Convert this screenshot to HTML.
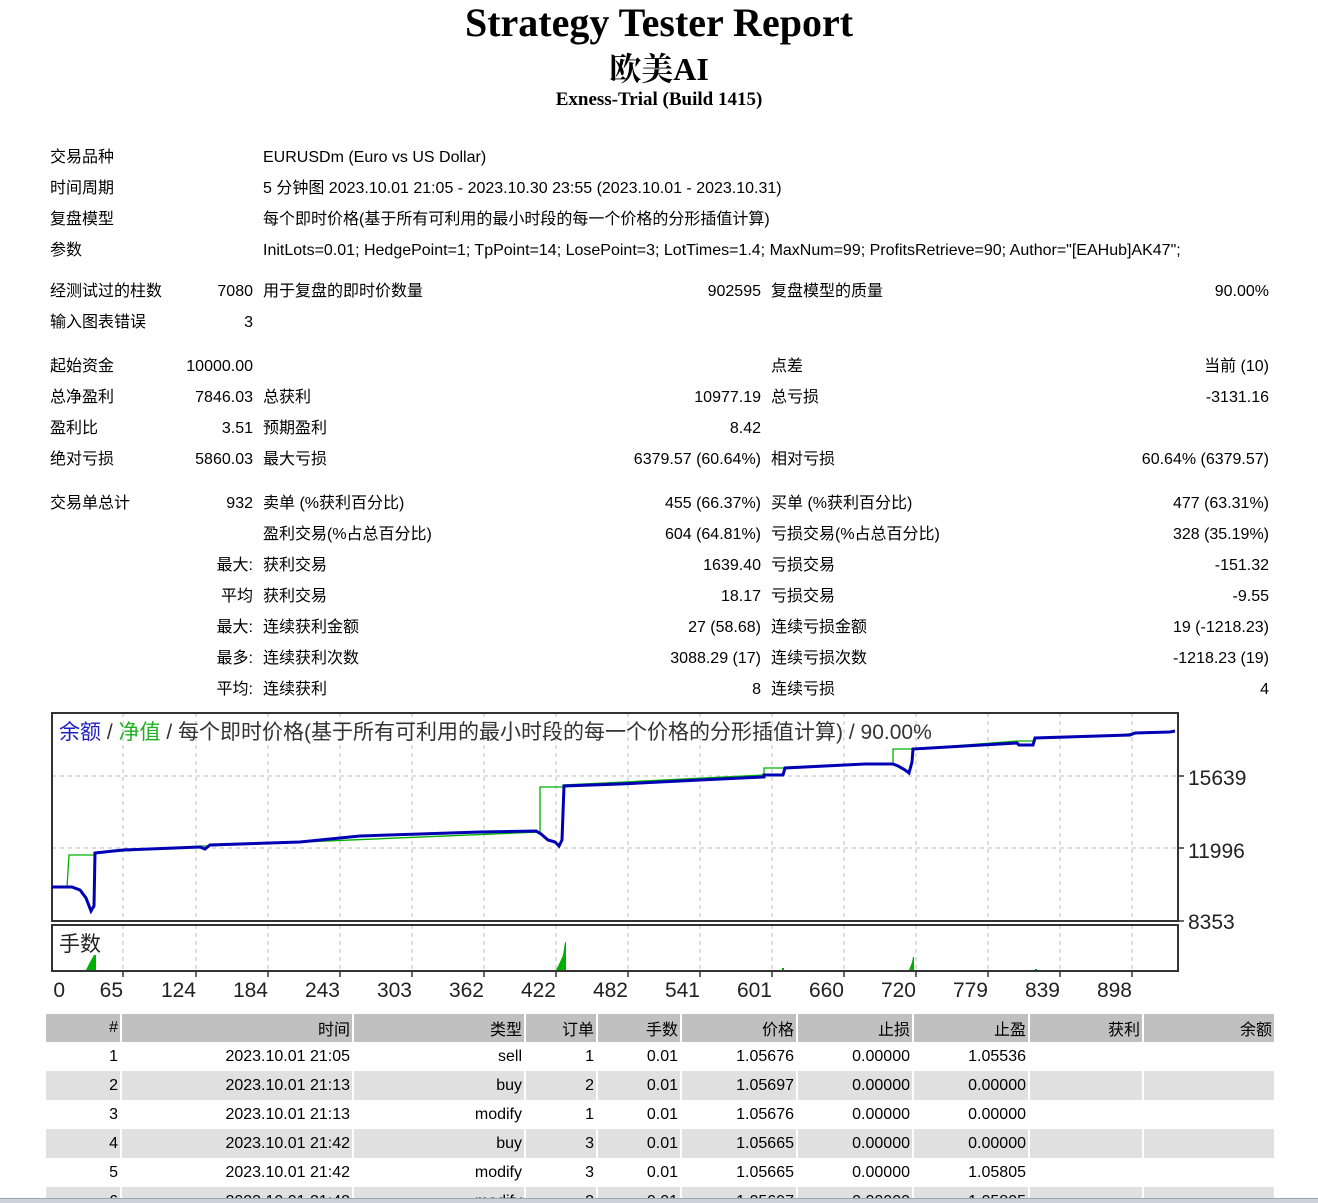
<!DOCTYPE html>
<html style="overflow:hidden;height:1203px"><head><meta charset="utf-8"><style>
body{margin:0;width:1318px;height:1203px;background:#fff;position:relative;overflow:hidden;font-family:Tahoma,"Liberation Sans","Noto Sans CJK SC",sans-serif;font-size:16px;color:#000}
.t{position:absolute;white-space:nowrap;line-height:18px}
.r{text-align:right}
.h1{position:absolute;left:0;width:1318px;text-align:center;font-family:"Liberation Serif",serif;font-weight:bold}
table{position:absolute;left:44px;top:1014px;border-collapse:separate;border-spacing:2px 0;font-size:16px}
td{height:29px;text-align:right;padding:0 2px;white-space:nowrap}
tr.hd td{background:#c0c0c0;height:28px}
tr.g td{background:#e0e0e0}
</style></head><body>
<div class="h1" style="top:1px;font-size:40px;line-height:44px">Strategy Tester Report</div>
<div class="h1" style="top:50px;font-size:32px;line-height:38px;font-family:'Liberation Serif','Noto Serif CJK SC',serif">欧美AI</div>
<div class="h1" style="top:89px;font-size:19px;line-height:22px">Exness-Trial (Build 1415)</div>

<div class="t" style="left:50px;top:149px">交易品种</div><div class="t" style="left:263px;top:149px">EURUSDm (Euro vs US Dollar)</div>
<div class="t" style="left:50px;top:180px">时间周期</div><div class="t" style="left:263px;top:180px">5 分钟图 2023.10.01 21:05 - 2023.10.30 23:55 (2023.10.01 - 2023.10.31)</div>
<div class="t" style="left:50px;top:211px">复盘模型</div><div class="t" style="left:263px;top:211px">每个即时价格(基于所有可利用的最小时段的每一个价格的分形插值计算)</div>
<div class="t" style="left:50px;top:242px">参数</div><div class="t" style="left:263px;top:242px">InitLots=0.01; HedgePoint=1; TpPoint=14; LosePoint=3; LotTimes=1.4; MaxNum=99; ProfitsRetrieve=90; Author="[EAHub]AK47";</div>

<div class="t" style="left:50px;top:283px">经测试过的柱数</div><div class="t r" style="right:1065px;top:283px">7080</div><div class="t" style="left:263px;top:283px">用于复盘的即时价数量</div><div class="t r" style="right:557px;top:283px">902595</div><div class="t" style="left:771px;top:283px">复盘模型的质量</div><div class="t r" style="right:49px;top:283px">90.00%</div>
<div class="t" style="left:50px;top:314px">输入图表错误</div><div class="t r" style="right:1065px;top:314px">3</div>

<div class="t" style="left:50px;top:358px">起始资金</div><div class="t r" style="right:1065px;top:358px">10000.00</div><div class="t" style="left:771px;top:358px">点差</div><div class="t r" style="right:49px;top:358px">当前 (10)</div>
<div class="t" style="left:50px;top:389px">总净盈利</div><div class="t r" style="right:1065px;top:389px">7846.03</div><div class="t" style="left:263px;top:389px">总获利</div><div class="t r" style="right:557px;top:389px">10977.19</div><div class="t" style="left:771px;top:389px">总亏损</div><div class="t r" style="right:49px;top:389px">-3131.16</div>
<div class="t" style="left:50px;top:420px">盈利比</div><div class="t r" style="right:1065px;top:420px">3.51</div><div class="t" style="left:263px;top:420px">预期盈利</div><div class="t r" style="right:557px;top:420px">8.42</div>
<div class="t" style="left:50px;top:451px">绝对亏损</div><div class="t r" style="right:1065px;top:451px">5860.03</div><div class="t" style="left:263px;top:451px">最大亏损</div><div class="t r" style="right:557px;top:451px">6379.57 (60.64%)</div><div class="t" style="left:771px;top:451px">相对亏损</div><div class="t r" style="right:49px;top:451px">60.64% (6379.57)</div>

<div class="t" style="left:50px;top:495px">交易单总计</div><div class="t r" style="right:1065px;top:495px">932</div><div class="t" style="left:263px;top:495px">卖单 (%获利百分比)</div><div class="t r" style="right:557px;top:495px">455 (66.37%)</div><div class="t" style="left:771px;top:495px">买单 (%获利百分比)</div><div class="t r" style="right:49px;top:495px">477 (63.31%)</div>
<div class="t" style="left:263px;top:526px">盈利交易(%占总百分比)</div><div class="t r" style="right:557px;top:526px">604 (64.81%)</div><div class="t" style="left:771px;top:526px">亏损交易(%占总百分比)</div><div class="t r" style="right:49px;top:526px">328 (35.19%)</div>
<div class="t r" style="right:1065px;top:557px">最大:</div><div class="t" style="left:263px;top:557px">获利交易</div><div class="t r" style="right:557px;top:557px">1639.40</div><div class="t" style="left:771px;top:557px">亏损交易</div><div class="t r" style="right:49px;top:557px">-151.32</div>
<div class="t r" style="right:1065px;top:588px">平均</div><div class="t" style="left:263px;top:588px">获利交易</div><div class="t r" style="right:557px;top:588px">18.17</div><div class="t" style="left:771px;top:588px">亏损交易</div><div class="t r" style="right:49px;top:588px">-9.55</div>
<div class="t r" style="right:1065px;top:619px">最大:</div><div class="t" style="left:263px;top:619px">连续获利金额</div><div class="t r" style="right:557px;top:619px">27 (58.68)</div><div class="t" style="left:771px;top:619px">连续亏损金额</div><div class="t r" style="right:49px;top:619px">19 (-1218.23)</div>
<div class="t r" style="right:1065px;top:650px">最多:</div><div class="t" style="left:263px;top:650px">连续获利次数</div><div class="t r" style="right:557px;top:650px">3088.29 (17)</div><div class="t" style="left:771px;top:650px">连续亏损次数</div><div class="t r" style="right:49px;top:650px">-1218.23 (19)</div>
<div class="t r" style="right:1065px;top:681px">平均:</div><div class="t" style="left:263px;top:681px">连续获利</div><div class="t r" style="right:557px;top:681px">8</div><div class="t" style="left:771px;top:681px">连续亏损</div><div class="t r" style="right:49px;top:681px">4</div>

<svg style="position:absolute;left:0;top:700px" width="1318" height="310" viewBox="0 700 1318 310">
<g stroke="#bbb" stroke-dasharray="4,4" stroke-width="1">
<path d="M123 713V921M196 713V921M268 713V921M340 713V921M412 713V921M484 713V921M556 713V921M628 713V921M700 713V921M772 713V921M844 713V921M916 713V921M988 713V921M1060 713V921M1132 713V921"/>
<path d="M123 925V971M196 925V971M268 925V971M340 925V971M412 925V971M484 925V971M556 925V971M628 925V971M700 925V971M772 925V971M844 925V971M916 925V971M988 925V971M1060 925V971M1132 925V971"/>
<path d="M52 776H1178M52 848H1178"/>
</g>
<rect x="52" y="713" width="1126" height="208" fill="none" stroke="#333" stroke-width="2"/>
<rect x="52" y="925" width="1126" height="46" fill="none" stroke="#333" stroke-width="2"/>
<g stroke="#333" stroke-width="1.5"><path d="M1178 776h6M1178 848h6M1178 921h6M123 971v6M196 971v6M268 971v6M340 971v6M412 971v6M484 971v6M556 971v6M628 971v6M700 971v6M772 971v6M844 971v6M916 971v6M988 971v6M1060 971v6M1132 971v6"/></g>
<polyline fill="none" stroke="#00b000" stroke-width="1.3" points="52,887 67,887 69,855 94,855 94,853 200,846 208,846 540,832 540,787 563,787 563,785 764,775 764,768 783,768 893,763 893,749 913,749 1017,741 1035,741 1035,738 1120,735 1135,733"/>
<polyline fill="none" stroke="#0000b4" stroke-width="3" points="52,887 72,887 80,890 86,898 91,911 94,906 95,853 123,850 200,847 205,849 210,845 300,842 360,836 420,834 480,832 536,831 541,834 548,840 555,842 559,846 562,840 564,786 620,784 700,780 764,777 764,775 783,775 785,768 865,764 893,764 898,766 905,770 909,773 912,762 913,749 1017,743 1019,745 1033,745 1035,738 1130,735 1135,733 1170,732 1175,731"/>
<g fill="#00b000">
<polygon points="86,970 90,962 94,955 96,955 96,970"/>
<polygon points="556,970 560,962 563,955 565,942 566,942 566,970"/>
<polygon points="909,970 912,962 913,957 914,957 914,970"/>
<rect x="782" y="968" width="2" height="2"/><rect x="1035" y="969" width="2" height="1"/>
</g>
<g font-family="Tahoma,'Liberation Sans','Noto Sans CJK SC',sans-serif" font-size="21">
<text x="59" y="739" fill="#2020c0">余额 <tspan fill="#333">/</tspan> <tspan fill="#20b020">净值</tspan> <tspan fill="#333">/ 每个即时价格(基于所有可利用的最小时段的每一个价格的分形插值计算) / 90.00%</tspan></text>
<text x="59" y="951" fill="#222">手数</text>
<g fill="#222" font-size="21">
<text x="1188" y="785">15639</text><text x="1188" y="858">11996</text><text x="1188" y="929">8353</text>
<g text-anchor="end"><text x="65" y="997">0</text><text x="123" y="997">65</text><text x="196" y="997">124</text><text x="268" y="997">184</text><text x="340" y="997">243</text><text x="412" y="997">303</text><text x="484" y="997">362</text><text x="556" y="997">422</text><text x="628" y="997">482</text><text x="700" y="997">541</text><text x="772" y="997">601</text><text x="844" y="997">660</text><text x="916" y="997">720</text><text x="988" y="997">779</text><text x="1060" y="997">839</text><text x="1132" y="997">898</text></g>
</g></g>
</svg>

<table>
<tr class="hd"><td style="width:70px">#</td><td style="width:226px">时间</td><td style="width:166px">类型</td><td style="width:66px">订单</td><td style="width:78px">手数</td><td style="width:110px">价格</td><td style="width:110px">止损</td><td style="width:110px">止盈</td><td style="width:108px">获利</td><td style="width:126px">余额</td></tr>
<tr><td>1</td><td>2023.10.01 21:05</td><td>sell</td><td>1</td><td>0.01</td><td>1.05676</td><td>0.00000</td><td>1.05536</td><td></td><td></td></tr>
<tr class="g"><td>2</td><td>2023.10.01 21:13</td><td>buy</td><td>2</td><td>0.01</td><td>1.05697</td><td>0.00000</td><td>0.00000</td><td></td><td></td></tr>
<tr><td>3</td><td>2023.10.01 21:13</td><td>modify</td><td>1</td><td>0.01</td><td>1.05676</td><td>0.00000</td><td>0.00000</td><td></td><td></td></tr>
<tr class="g"><td>4</td><td>2023.10.01 21:42</td><td>buy</td><td>3</td><td>0.01</td><td>1.05665</td><td>0.00000</td><td>0.00000</td><td></td><td></td></tr>
<tr><td>5</td><td>2023.10.01 21:42</td><td>modify</td><td>3</td><td>0.01</td><td>1.05665</td><td>0.00000</td><td>1.05805</td><td></td><td></td></tr>
<tr class="g"><td>6</td><td>2023.10.01 21:42</td><td>modify</td><td>2</td><td>0.01</td><td>1.05697</td><td>0.00000</td><td>1.05805</td><td></td><td></td></tr>
</table>
<div style="position:absolute;left:0;top:1198px;width:1318px;height:5px;background:#cdd3dc;border-top:1px solid #9aa"></div>
</body></html>
